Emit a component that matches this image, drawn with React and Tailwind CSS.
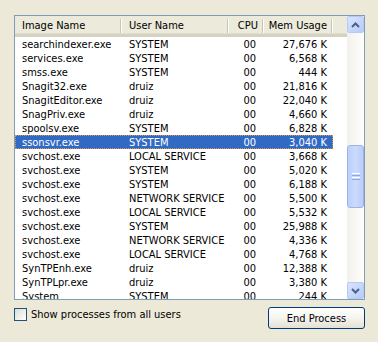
import React from 'react';

const rows = [
    ['searchindexer.exe', 'SYSTEM', '00', '27,676 K'],
    ['services.exe', 'SYSTEM', '00', '6,568 K'],
    ['smss.exe', 'SYSTEM', '00', '444 K'],
    ['Snagit32.exe', 'druiz', '00', '21,816 K'],
    ['SnagitEditor.exe', 'druiz', '00', '22,040 K'],
    ['SnagPriv.exe', 'druiz', '00', '4,660 K'],
    ['spoolsv.exe', 'SYSTEM', '00', '6,828 K'],
    ['ssonsvr.exe', 'SYSTEM', '00', '3,040 K'],
    ['svchost.exe', 'LOCAL SERVICE', '00', '3,668 K'],
    ['svchost.exe', 'SYSTEM', '00', '5,020 K'],
    ['svchost.exe', 'SYSTEM', '00', '6,188 K'],
    ['svchost.exe', 'NETWORK SERVICE', '00', '5,500 K'],
    ['svchost.exe', 'LOCAL SERVICE', '00', '5,532 K'],
    ['svchost.exe', 'SYSTEM', '00', '25,988 K'],
    ['svchost.exe', 'NETWORK SERVICE', '00', '4,336 K'],
    ['svchost.exe', 'LOCAL SERVICE', '00', '4,768 K'],
    ['SynTPEnh.exe', 'druiz', '00', '12,388 K'],
    ['SynTPLpr.exe', 'druiz', '00', '3,380 K'],
    ['System', 'SYSTEM', '00', '244 K'],
];

const SELECTED = 7;

const HeaderCell = ({ label, width, right }) => (
    <div className={`${width} h-full flex items-center shrink-0 relative ${right ? 'justify-end pr-[6px]' : 'pl-[7px]'}`}>
        <span className="whitespace-nowrap">{label}</span>
        <div className="absolute right-0 top-[3px] h-[14px] flex">
            <div className="w-px bg-[#C7C5B2]" />
            <div className="w-px bg-white" />
        </div>
    </div>
);

const ScrollButton = ({ down }) => (
    <div className="h-[17px] w-[17px] rounded-[2px] border border-[#B7CAF5] bg-gradient-to-br from-[#D9E4FE] to-[#B6CBF8] flex items-center justify-center">
        <svg width="9" height="6" viewBox="0 0 9 6" className={down ? 'rotate-180' : ''}>
            <path d="M1 5 L4.5 1.5 L8 5" fill="none" stroke="#4D6185" strokeWidth="2" />
        </svg>
    </div>
);

export default function App() {
    return (
        <div
            className="w-[378px] h-[342px] bg-[#ECE9D8] pt-[15px] pl-[14px] text-[11px] text-black leading-none"
            style={{ fontFamily: "Tahoma, 'DejaVu Sans Condensed', 'DejaVu Sans', sans-serif" }}
        >
            <div className="w-[351px] h-[285px] border border-[#7F9DB9] bg-white flex overflow-hidden">
                <div className="w-[332px] flex flex-col overflow-hidden">
                    <div className="h-[21px] shrink-0 flex bg-[#EBEADB] border-b-[3px] border-[#D6D2C2] shadow-[inset_0_-1px_0_#E2DECD]">
                        <HeaderCell label="Image Name" width="w-[107px]" />
                        <HeaderCell label="User Name" width="w-[107px]" />
                        <HeaderCell label="CPU" width="w-[35px]" right />
                        <HeaderCell label="Mem Usage" width="w-[69px]" right />
                    </div>
                    <div className="flex flex-col">
                        {rows.map((r, i) => (
                            <div
                                key={i}
                                className={`h-[14px] shrink-0 flex items-center w-[318px] ${
                                    i === SELECTED
                                        ? 'bg-[#316AC5] text-white outline-1 outline-dotted outline-[#D89A3C] -outline-offset-1'
                                        : ''
                                }`}
                            >
                                <div className="w-[107px] pl-[7px] whitespace-nowrap overflow-hidden">{r[0]}</div>
                                <div className="w-[107px] pl-[7px] whitespace-nowrap overflow-hidden">{r[1]}</div>
                                <div className="w-[35px] pr-[8px] text-right whitespace-nowrap">{r[2]}</div>
                                <div className="w-[69px] pr-[6px] text-right whitespace-nowrap">{r[3]}</div>
                            </div>
                        ))}
                    </div>
                </div>
                <div className="w-[17px] shrink-0 bg-gradient-to-r from-[#F3F1EC] to-[#FEFEFB] flex flex-col">
                    <ScrollButton />
                    <div className="h-[112px] shrink-0" />
                    <div className="h-[63px] shrink-0 rounded-[3px] border border-[#9DB3E6] bg-gradient-to-r from-[#BCD0FA] via-[#CBDAFD] to-[#B9CDF9] flex flex-col items-center justify-center gap-px">
                        <div className="w-[8px] h-px bg-white" />
                        <div className="w-[8px] h-px bg-[#8FA9E6]" />
                        <div className="w-[8px] h-px bg-white" />
                        <div className="w-[8px] h-px bg-[#8FA9E6]" />
                    </div>
                    <div className="flex-1" />
                    <ScrollButton down />
                </div>
            </div>
            <div className="w-[351px] mt-[7px] flex justify-between items-start">
                <label className="flex items-center gap-[4px] mt-px">
                    <span className="w-[13px] h-[13px] border border-[#1C5180] bg-gradient-to-br from-[#DCDCD7] to-white" />
                    <span>Show processes from all users</span>
                </label>
                <button className="w-[97px] h-[22px] rounded-[3px] border border-[#003C74] bg-gradient-to-b from-white via-[#F5F4EF] to-[#E3E1D6] text-[11px]">
                    End Process
                </button>
            </div>
        </div>
    );
}
